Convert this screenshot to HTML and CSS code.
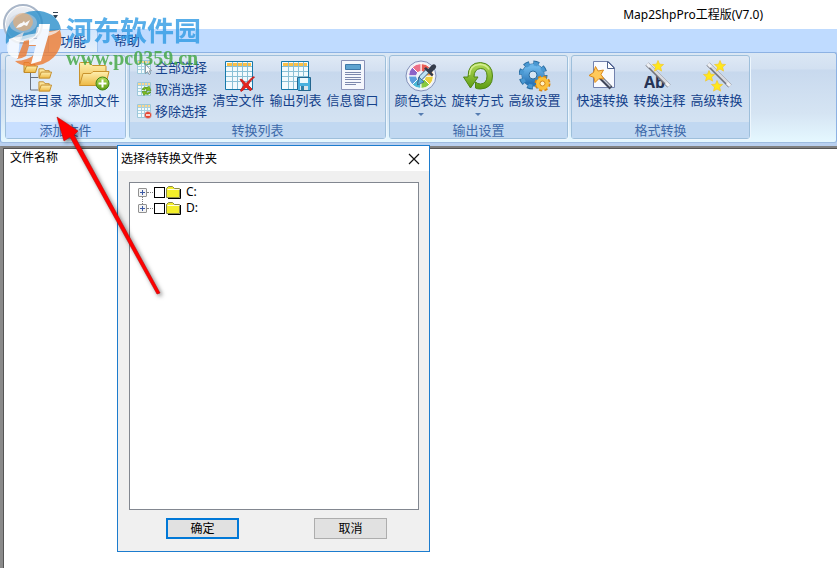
FILE: index.html
```
<!DOCTYPE html>
<html lang="zh-CN">
<head>
    <meta charset="utf-8">
    <title>Map2ShpPro工程版(V7.0)</title>
    <meta name="viewport" content="width=device-width, initial-scale=1">
    <link rel="stylesheet" href="styles.css">
</head>
<body>

<!-- 公用图形 -->
<svg class="defs" width="0" height="0" aria-hidden="true">
    <defs>
        <linearGradient id="gold" x1="0" y1="0" x2="0" y2="1">
            <stop offset="0" stop-color="#fff0b0"/>
            <stop offset="1" stop-color="#edb843"/>
        </linearGradient>
        <linearGradient id="leaf" x1="0" y1="0" x2="0" y2="1">
            <stop offset="0" stop-color="#b5dc5a"/>
            <stop offset="1" stop-color="#5c9c12"/>
        </linearGradient>
        <linearGradient id="steel" x1="0" y1="0" x2="0" y2="1">
            <stop offset="0" stop-color="#6cb6ea"/>
            <stop offset="1" stop-color="#2b77b8"/>
        </linearGradient>
        <symbol id="folder" viewBox="0 0 15 12">
            <path d="M1 11V1.500h5l1.500 2H12V5" fill="url(#gold)" stroke="#c18a28"/>
            <path d="M1 11.500 3.500 5h11L12.500 11.500z" fill="url(#gold)" stroke="#c18a28"/>
        </symbol>
        <symbol id="star" viewBox="0 0 12 12">
            <path d="M6 .5 7.600 4.200l4 .3-3 2.600 1 4L6 9l-3.500 2.100 1-4L.5 4.500l4-.3z" fill="#ffe81a" stroke="#f3c62b" stroke-width=".7"/>
        </symbol>
        <symbol id="wand" viewBox="0 0 26 26">
            <path d="M2 2 24 24" stroke="#70737c" stroke-width="4.500"/>
            <path d="M2.500 1.500 24.500 23.500" stroke="#d8dae0" stroke-width="2.500"/>
            <path d="M2 2 5 5M21 21l3 3" stroke="#eef0f4" stroke-width="3"/>
        </symbol>
        <symbol id="grid" viewBox="0 0 28 29">
            <path d="M.5.500h27v28H.5z" fill="#f2fafd" stroke="#1679aa"/>
            <path d="M2 2h24v3H2z" fill="#fbbf45"/>
            <path d="M7.500 1v27M12.500 1v27M17.500 1v27M22.500 1v27M1 5.500h26M1 10.500h26M1 15.500h26M1 20.500h26" stroke="#8ac0d6"/>
        </symbol>
        <symbol id="smallgrid" viewBox="0 0 14 14">
            <path d="M.5.500h13v13H.5z" fill="#f4fbfd" stroke="#9dc8da"/>
            <path d="M1 1h12v2H1z" fill="#f9d791"/>
            <path d="M4.500 1v12M7.500 1v12M10.500 1v12M1 3.500h12M1 6.500h12M1 9.500h12" stroke="#a7d0e0"/>
        </symbol>
    </defs>
</svg>

<div class="window">
    <header class="titlebar">
        <h1 class="window-title">Map2ShpPro工程版(V7.0)</h1>
    </header>

    <nav class="tabs">
        <a href="#" class="tab active">功能</a>
        <a href="#" class="tab">帮助</a>
    </nav>

    <div class="ribbon">
        <section class="group hot">
            <div class="group-body">
                <button type="button" class="tool">
                    <svg class="icon" viewBox="0 0 32 32" fill="none">
                        <path d="M9.500 12v18H17M9.500 17.500H17" stroke="#68717f"/>
                        <use href="#folder" x="2" y="1" width="15" height="12"/>
                        <use href="#folder" x="17" y="7" width="14" height="12"/>
                        <use href="#folder" x="17" y="20" width="14" height="12"/>
                    </svg>
                    <span>选择目录</span>
                </button>
                <button type="button" class="tool">
                    <svg class="icon" viewBox="0 0 32 32" fill="none">
                        <path d="M1.500 24V3.500q0-1 1-1h9l3 3H27q1 0 1 1V14" fill="url(#gold)" stroke="#c9932d"/>
                        <path d="M1.500 25.500 5 13.500h8l2-2h16L27.500 25.500z" fill="url(#gold)" stroke="#c9932d"/>
                        <circle cx="24.500" cy="23.500" r="6.500" fill="url(#leaf)" stroke="#3f8418"/>
                        <path d="M24.500 19.500v8M20.500 23.500h8" stroke="#fff" stroke-width="2"/>
                    </svg>
                    <span>添加文件</span>
                </button>
            </div>
            <h2 class="group-title">添加文件</h2>
        </section>

        <section class="group">
            <div class="group-body">
                <div class="small-tools">
                    <button type="button" class="small-tool">
                        <svg class="small-icon" viewBox="0 0 16 16">
                            <use href="#smallgrid" x="1" y="1" width="14" height="14"/>
                            <path d="M9.500 5.500v9l2-2 1.500 3 1.500-.8-1.400-2.900h2.400z" fill="#fff" stroke="#7a8594" stroke-width=".8"/>
                        </svg>
                        <span>全部选择</span>
                    </button>
                    <button type="button" class="small-tool">
                        <svg class="small-icon" viewBox="0 0 16 16">
                            <use href="#smallgrid" x="1" y="1" width="14" height="14"/>
                            <path d="M6 8.500q2-3.500 6-2l1-1.500 2 4.500h-5l1-1.500q-2-.5-3 1zM15 11q-2 3.500-6 2l-1 1.500-2-4h5l-1 1.500q2 .5 3-1z" fill="#7dbb20" stroke="#4e8b10" stroke-width=".6"/>
                        </svg>
                        <span>取消选择</span>
                    </button>
                    <button type="button" class="small-tool">
                        <svg class="small-icon" viewBox="0 0 16 16">
                            <use href="#smallgrid" x="1" y="1" width="14" height="14"/>
                            <circle cx="12" cy="12" r="3.500" fill="#e8432e" stroke="#c9ccd6" stroke-width=".6"/>
                            <path d="M10 12h4" stroke="#fff" stroke-width="1.500"/>
                        </svg>
                        <span>移除选择</span>
                    </button>
                </div>
                <button type="button" class="tool">
                    <svg class="icon" viewBox="0 0 32 32" fill="none">
                        <use href="#grid" x="2" y="1" width="28" height="29"/>
                        <path d="M17 19.500q2-1 3 1l3 3 6-6q1-1 2.500-.5Q27 21 25 25l4 4q-1 2-2 1.500L23 27q-2 3-5 4.500-1-1 0-2l3-4.500z" fill="#e6251d" stroke="#bb1614" stroke-width=".8"/>
                    </svg>
                    <span>清空文件</span>
                </button>
                <button type="button" class="tool">
                    <svg class="icon" viewBox="0 0 32 32" fill="none">
                        <use href="#grid" x="1" y="1" width="28" height="29"/>
                        <path d="M17.500 17.500h13v13h-12l-1-1z" fill="#49b0de" stroke="#24668f"/>
                        <path d="M20 18h8v5h-8z" fill="#eef8fc"/>
                        <path d="M20 26h8v4h-8z" fill="#dbe3ea"/>
                        <path d="M21 26h3v4h-3z" fill="#2e7ea8"/>
                    </svg>
                    <span>输出列表</span>
                </button>
                <button type="button" class="tool">
                    <svg class="icon" viewBox="0 0 32 32" fill="none">
                        <path d="M4.500.500h23v29h-23z" fill="#f5f7fd" stroke="#8a93b8"/>
                        <path d="M8.500 4.500h15v5h-15z" fill="#5fa3d0" stroke="#3e78a8"/>
                        <path d="M8 12.500h16M8 14.500h16M8 17.500h16M8 19.500h16M8 22.500h16M8 24.500h11" stroke="#7c88ad"/>
                    </svg>
                    <span>信息窗口</span>
                </button>
            </div>
            <h2 class="group-title">转换列表</h2>
        </section>

        <section class="group">
            <div class="group-body">
                <button type="button" class="tool">
                    <svg class="icon" viewBox="0 0 32 32">
                        <circle cx="16" cy="16" r="15" fill="#eef2fa" stroke="#8290b8"/>
                        <g stroke="#fff">
                            <path d="M16 16V3.500a12.500 12.500 0 0 1 8.800 3.700z" fill="#e95d54"/>
                            <path d="M16 16 7.200 7.200A12.500 12.500 0 0 1 16 3.500z" fill="#ec7088"/>
                            <path d="M16 16H3.500a12.500 12.500 0 0 1 3.700-8.800z" fill="#8c62c8"/>
                            <path d="M16 16l-8.800 8.800A12.500 12.500 0 0 1 3.500 16z" fill="#5c9ede"/>
                            <path d="M16 16v12.500a12.500 12.500 0 0 1-8.800-3.700z" fill="#4cb9d8"/>
                            <path d="M16 16l8.800 8.800a12.500 12.500 0 0 1-8.800 3.700z" fill="#87c93f"/>
                            <path d="M16 16h12.500a12.500 12.500 0 0 1-3.700 8.800z" fill="#e8cf3c"/>
                            <path d="M16 16l8.800-8.800a12.500 12.500 0 0 1 3.700 8.800z" fill="#f29b3c"/>
                        </g>
                        <circle cx="16" cy="16" r="5" fill="#eef3fa"/>
                        <path d="M13 23.500 24 12.500l-3-3L15 15.500 13.500 18z" fill="#bfe2f4" stroke="#375b80"/>
                        <path d="M12.500 25 14 17l5 5z" fill="#58a9d8" stroke="#375b80" stroke-width=".7"/>
                        <path d="M19 8.500 21 7l2 2 4-4q2-1.500 3.500 0t0 3.500l-4 4 2 2-1.500 2z" fill="#343c4c"/>
                    </svg>
                    <span>颜色表达</span>
                    <i class="caret"></i>
                </button>
                <button type="button" class="tool">
                    <svg class="icon" viewBox="0 0 32 32">
                        <path d="M1.500 17H6Q6 2.500 18.500 2.500 30.500 3.500 30.500 16T18.500 29q-3 0-5-1v-6q2 2 5 2 6.500-.5 6.500-8t-6.500-7.500Q12 9 12 17h4L8.500 28z" fill="url(#leaf)" stroke="#4f8515"/>
                        <path d="M7.500 15Q8 5 17 4.500q7-.5 10 5" fill="none" stroke="#d4ed91" stroke-width="1.500"/>
                    </svg>
                    <span>旋转方式</span>
                    <i class="caret"></i>
                </button>
                <button type="button" class="tool">
                    <svg class="icon" viewBox="0 0 32 32" fill="none">
                        <circle cx="14" cy="15" r="12" stroke="#286b9f" stroke-width="5" stroke-dasharray="5.500 3.925"/>
                        <circle cx="14" cy="15" r="8" stroke="#286b9f" stroke-width="7"/>
                        <circle cx="14" cy="15" r="7.500" stroke="url(#steel)" stroke-width="7"/>
                        <circle cx="14" cy="15" r="11.500" stroke="#4a98d2" stroke-width="4" stroke-dasharray="4.300 4.732" stroke-dashoffset="-.5"/>
                        <circle cx="14" cy="15" r="4" fill="#d6e5f3" stroke="#286b9f"/>
                        <circle cx="23.500" cy="23.500" r="6.500" stroke="#d98610" stroke-width="3" stroke-dasharray="3 2.105"/>
                        <circle cx="23.500" cy="23.500" r="4.500" stroke="#fbc13c" stroke-width="4"/>
                        <circle cx="23.500" cy="23.500" r="2.500" fill="#fff1c4" stroke="#d98610"/>
                    </svg>
                    <span>高级设置</span>
                </button>
            </div>
            <h2 class="group-title">输出设置</h2>
        </section>

        <section class="group">
            <div class="group-body">
                <button type="button" class="tool">
                    <svg class="icon" viewBox="0 0 32 32">
                        <path d="M6.500 1.500h15l6 6v20h-21z" fill="#f8faff" stroke="#7382ad"/>
                        <path d="M20.500 1.500v7h7z" fill="#fff" stroke="#4e628e"/>
                        <path d="M13 17 24 28" stroke="#3f4658" stroke-width="4"/>
                        <path d="M12.500 15.500 23.500 26.500" stroke="#c5cbd8" stroke-width="1.500"/>
                        <path d="M8.500 6.500 11 11l5.500-1-2.500 4.500 3 4.500-5-.5L8 22.500 7 17.500 2 15.500l4.500-3z" fill="#ffc95a" stroke="#dc8a1c"/>
                    </svg>
                    <span>快速转换</span>
                </button>
                <button type="button" class="tool">
                    <svg class="icon" viewBox="0 0 32 32">
                        <text class="icon-text" x="0" y="28">Ab</text>
                        <use href="#wand" x="1" y="2" width="26" height="26"/>
                        <use href="#star" x="8" y="0" width="12" height="12"/>
                    </svg>
                    <span>转换注释</span>
                </button>
                <button type="button" class="tool">
                    <svg class="icon" viewBox="0 0 32 32">
                        <use href="#wand" x="5" y="2" width="26" height="26"/>
                        <use href="#star" x="13" y="0" width="12" height="12"/>
                        <use href="#star" x="2" y="10" width="12" height="12"/>
                        <use href="#star" x="10" y="20" width="12" height="12"/>
                    </svg>
                    <span>高级转换</span>
                </button>
            </div>
            <h2 class="group-title">格式转换</h2>
        </section>
    </div>

    <main class="workspace">
        <div class="list-head">文件名称</div>
    </main>
</div>

<!-- 左上角圆形菜单 -->
<button type="button" class="app-button" aria-label="菜单"></button>
<button type="button" class="quick-menu" aria-label="自定义快速访问工具栏"></button>

<!-- 选择文件夹窗口 -->
<div class="dialog" role="dialog" aria-labelledby="dialog-title">
    <div class="dialog-head">
        <h2 id="dialog-title">选择待转换文件夹</h2>
        <button type="button" class="close" aria-label="关闭">
            <svg width="12" height="12" viewBox="0 0 12 12"><path d="M1 1 11 11M11 1 1 11" stroke="#111" stroke-width="1.200"/></svg>
        </button>
    </div>
    <div class="dialog-body">
        <ul class="tree">
            <li class="node">
                <button type="button" class="expand" aria-label="展开 C:"></button>
                <label>
                    <input type="checkbox">
                    <svg width="16" height="14" viewBox="0 0 16 14"><path d="M2 13.500h12.500V4" fill="none" stroke="#000"/><path d="M.5 12.500v-9l2-2h4l2 2h5v9z" fill="#f4ef2a" stroke="#8c8c4a"/><path d="M1.500 4.500h12" stroke="#fffde0"/></svg>
                    <span>C:</span>
                </label>
            </li>
            <li class="node">
                <button type="button" class="expand" aria-label="展开 D:"></button>
                <label>
                    <input type="checkbox">
                    <svg width="16" height="14" viewBox="0 0 16 14"><path d="M2 13.500h12.500V4" fill="none" stroke="#000"/><path d="M.5 12.500v-9l2-2h4l2 2h5v9z" fill="#f4ef2a" stroke="#8c8c4a"/><path d="M1.500 4.500h12" stroke="#fffde0"/></svg>
                    <span>D:</span>
                </label>
            </li>
        </ul>
        <div class="dialog-btns">
            <button type="button" class="btn primary">确定</button>
            <button type="button" class="btn">取消</button>
        </div>
    </div>
</div>

<!-- 站点水印 -->
<div class="watermark">
    <svg class="mark-logo" width="60" height="60" viewBox="0 0 60 60">
        <path d="M3 36Q1 14 19 6q15-7 30 1 8 6 9 15l-12 2-4 2 1-7h-9l-2 9-14 4 3-8q-9 3-18 12z" fill="#2a8fcb"/>
        <ellipse cx="20" cy="15" rx="14" ry="10" fill="#c6ccd6" opacity=".5"/>
        <ellipse cx="20" cy="14" rx="10" ry="9" fill="#eaa15c" opacity=".7"/>
        <path d="M13 20q3-5 6-5l2-2 1 2 5-3-3 6-3-1-3 2z" fill="#fff"/>
        <path d="M46 23l11-1q5 14-6 27-10 10-27 9-8-1-12-5 13 0 21-8l1-7h-8l-3 10q-5 3-9 3l7-18 11-2-2 6h9l4-12z" fill="#ee7b30"/>
        <path d="M6 31l-1 14q3 5 10 5l2-21q-7 0-11 2zM36 16l-2 15h-8v6h7l-5 19 10-3 8-28 1-9z" fill="#fff"/>
        <path d="M4 37q10-10 32-12 15-1 22-4-8 8-25 9Q14 32 4 44z" fill="#fff" opacity=".7"/>
    </svg>
    <div class="mark-text">
        <div class="mark-name">河东软件园</div>
        <div class="mark-url">www.pc0359.cn</div>
    </div>
</div>

<!-- 指示箭头 -->
<svg class="arrow" width="112" height="188" viewBox="0 0 112 188" aria-hidden="true">
    <path d="M6 8 13 32 19 28 106 185 109 184 23 26 27 22z" fill="#f00" stroke="#c00808" stroke-width=".6" stroke-linejoin="round"/>
</svg>

</body>
</html>
```
FILE: styles.css
```
* {
    box-sizing: border-box;
}
html, body {
    height: 100%;
    margin: 0;
}
body {
    position: relative;
    overflow: hidden;
    background: #fff;
    color: #000;
    font: 12px/16px "Noto Sans", "Noto Sans CJK SC", sans-serif;
}
h1, h2, ul {
    margin: 0;
    padding: 0;
    font-size: inherit;
    font-weight: normal;
    list-style: none;
}
button {
    padding: 0;
    border: 0;
    background: none;
    color: inherit;
    font: inherit;
}
.defs {
    position: absolute;
}
.window {
    display: flex;
    flex-direction: column;
    height: 100%;
    background: #b9d0ef;
}

/* 标题栏和选项卡 */
.titlebar {
    display: flex;
    align-items: center;
    justify-content: flex-end;
    height: 29px;
    padding-right: 74px;
    background: #fff;
}
.tabs {
    display: flex;
    align-items: flex-end;
    height: 23px;
    padding-left: 48px;
    background: #bfdbff;
}
.tab {
    width: 50px;
    height: 23px;
    color: #15428b;
    font-size: 13px;
    line-height: 23px;
    text-align: center;
    text-decoration: none;
}
.tab + .tab {
    margin-left: 4px;
}
.tab.active {
    border: 1px solid #9fc4f0;
    border-bottom: 0;
    border-radius: 3px 3px 0 0;
    background: linear-gradient(#d3e6fd, #e5f0fa);
}

/* 功能区 */
.ribbon {
    display: flex;
    gap: 3px;
    height: 91px;
    padding: 2px 4px 3px;
    border: 1px solid #8db2e3;
    border-bottom-color: #9dbce0;
    border-radius: 3px;
    background: linear-gradient(#dae7f4 0, #d2e0f1 16px, #c8d9ee 17px, #d5e4f3 60px, #e5f8ff 100%);
}
.group {
    display: flex;
    flex-direction: column;
    border: 1px solid #9ebfdb;
    border-radius: 3px;
    background: linear-gradient(#dfe9f5 0, #d3e0f1 15px, #c7d8ed 16px, #d8e6f4 100%);
    box-shadow: 1px 1px 0 #edf6fd;
}
.group.hot {
    background: linear-gradient(#e6eef9 0, #dee9f6 15px, #dbe8f7 16px, #e9f3fe 100%);
}
.group-body {
    display: flex;
    flex: 1;
    padding: 0 4px 0 2px;
}
.group.hot .group-body {
    padding: 0 3px 0 2px;
}
.group-title {
    height: 16px;
    background: #c1d8f1;
    color: #3e6aaa;
    font-size: 13px;
    line-height: 16px;
    text-align: center;
}
.group.hot .group-title {
    background: #c8dfff;
}
.tool {
    display: flex;
    flex-direction: column;
    align-items: center;
    width: 57px;
    padding-top: 4px;
    color: #15428b;
    font-size: 13px;
    line-height: 16px;
    white-space: nowrap;
}
.icon {
    width: 32px;
    height: 32px;
}
.icon-text {
    fill: #263456;
    font: bold 16px "Noto Sans", sans-serif;
}
.caret {
    margin-top: 5px;
    border: 3px solid transparent;
    border-top-color: #567db1;
    border-bottom: 0;
}
.small-tools {
    padding: 0 3px 0 4px;
}
.small-tool {
    display: flex;
    align-items: center;
    gap: 3px;
    height: 22px;
    color: #15428b;
    font-size: 13px;
    white-space: nowrap;
}
.small-icon {
    width: 16px;
    height: 16px;
}

/* 文件列表 */
.workspace {
    flex: 1;
    margin-top: 3px;
    border-top: 2px solid #808080;
    border-left: 3px solid #8a8a8a;
    background: #fff;
    box-shadow: inset 1px 1px 0 #555;
}
.list-head {
    padding: 2px 7px;
}

.app-button {
    position: absolute;
    top: 4px;
    left: 3px;
    width: 40px;
    height: 40px;
    border: 2px solid #a9b6c8;
    border-radius: 50%;
    background: linear-gradient(#eef1f6, #c3cedc);
    box-shadow: inset 0 0 0 1px #fff;
}
.quick-menu {
    position: absolute;
    top: 12px;
    left: 53px;
    width: 5px;
    height: 6px;
    border-top: 1px solid #345;
}
.quick-menu::after {
    content: "";
    display: block;
    margin-top: 2px;
    border: 2px solid transparent;
    border-top: 3px solid #345;
    border-bottom: 0;
}

/* 文件夹窗口 */
.dialog {
    position: absolute;
    top: 145px;
    left: 117px;
    width: 313px;
    border: 1px solid #1c7cce;
    background: #f0f0f0;
}
.dialog-head {
    display: flex;
    align-items: center;
    justify-content: space-between;
    height: 25px;
    padding: 0 9px 0 3px;
    background: #fff;
}
.close {
    display: flex;
}
.dialog-body {
    padding: 11px 10px 12px 11px;
}
.tree {
    height: 328px;
    padding: 1px 8px;
    border: 1px solid #828790;
    background: #fff;
}
.node {
    display: flex;
    align-items: center;
    height: 16px;
}
.node label {
    display: flex;
    align-items: center;
}
.node label::before {
    content: "";
    width: 6px;
    border-top: 1px dotted #808080;
}
.node input {
    appearance: none;
    width: 11px;
    height: 11px;
    margin: 0 1px;
    border: 1px solid #000;
    background: #fff;
}
.node span {
    margin-left: 4px;
}
.expand {
    position: relative;
    width: 9px;
    height: 9px;
    border: 1px solid #919191;
    border-radius: 1px;
    background: linear-gradient(#3c5aa5, #3c5aa5) center / 5px 1px no-repeat, linear-gradient(#3c5aa5, #3c5aa5) center / 1px 5px no-repeat, #f4f4f4;
}
.node + .node .expand::before {
    content: "";
    position: absolute;
    top: -8px;
    left: 3px;
    height: 7px;
    border-left: 1px dotted #808080;
}
.dialog-btns {
    display: flex;
    justify-content: space-between;
    padding: 8px 32px 0 37px;
}
.btn {
    width: 73px;
    height: 21px;
    border: 1px solid #adadad;
    background: #e1e1e1;
}
.btn.primary {
    border: 2px solid #0078d7;
}

/* 水印和箭头 */
.watermark {
    position: absolute;
    top: 0;
    left: 3px;
    display: flex;
    gap: 3px;
    pointer-events: none;
}
.mark-logo {
    margin-top: 8px;
    opacity: .8;
}
.mark-text {
    padding-top: 14px;
    white-space: nowrap;
}
.mark-name {
    color: #2f9be4;
    font: bold 27px/32px "Noto Sans CJK SC", sans-serif;
    opacity: .8;
}
.mark-url {
    color: #3fa53f;
    font: bold 20px/24px "Liberation Serif", serif;
    opacity: .8;
}
.arrow {
    position: absolute;
    top: 109px;
    left: 51px;
    filter: drop-shadow(2px 2px 2px rgba(0, 0, 0, .5));
    pointer-events: none;
}
```
